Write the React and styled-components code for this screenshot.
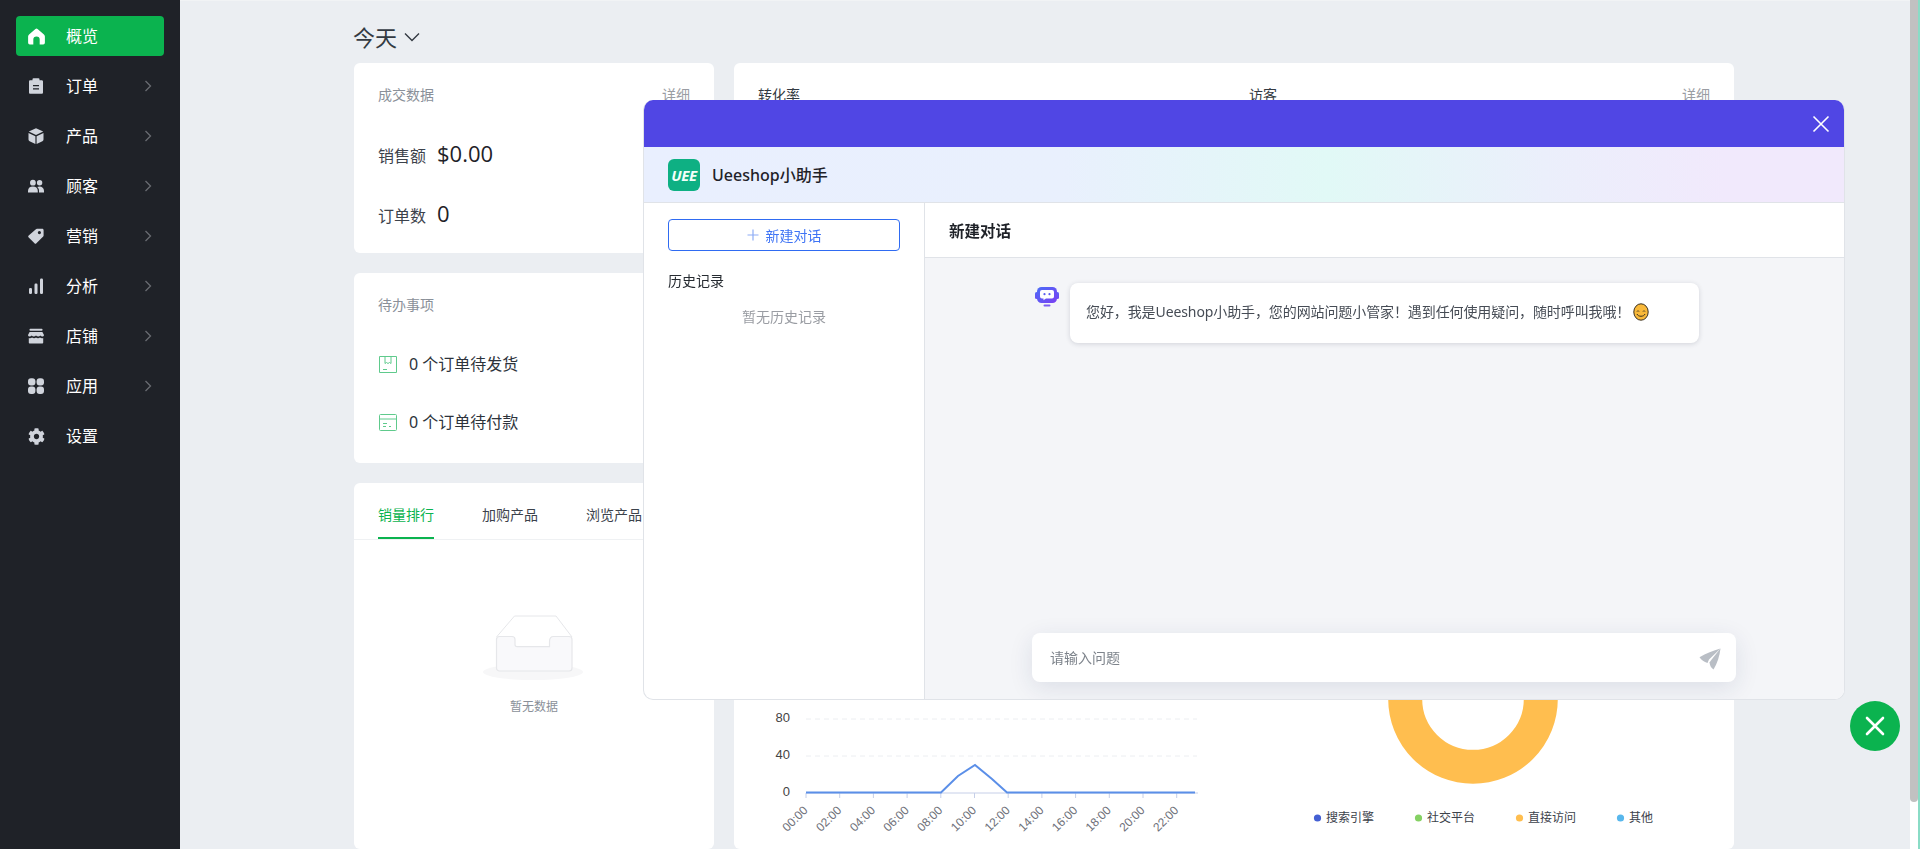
import React from "react";
import styled, { createGlobalStyle } from "styled-components";
import { FaCog } from "react-icons/fa";

const GlobalStyle = createGlobalStyle`
  html, body {
    margin: 0;
    padding: 0;
    height: 100%;
    overflow: hidden;
  }
  body {
    font-family: "Noto Sans", "Noto Sans CJK SC", sans-serif;
    color: #1f2228;
    background: #ebeef2;
  }
  * {
    box-sizing: border-box;
  }
`;

const Page = styled.div`
  display: flex;
  width: 1920px;
  height: 849px;
  overflow: hidden;
`;

const Sidebar = styled.nav`
  flex: 0 0 180px;
  padding: 16px 16px 0;
  background: #1f2228;
`;

const NavItem = styled.div`
  display: flex;
  align-items: center;
  height: 40px;
  margin-bottom: 10px;
  padding-left: 12px;
  border-radius: 4px;
  background: ${(p) => (p.$active ? "#0bb34f" : "transparent")};
  color: ${(p) => (p.$active ? "#fff" : "#d0d4dc")};

  svg.icon {
    flex: 0 0 16px;
    width: 16px;
    height: 16px;
    fill: currentColor;
  }

  svg.big {
    flex: 0 0 17px;
    width: 17px;
    height: 17px;
    margin: 0 -0.5px;
  }
`;

const NavLabel = styled.span`
  margin-left: 22px;
  flex: 1;
  color: #fff;
  font-size: 16px;
  line-height: 20px;
`;

const NavArrow = styled.svg`
  width: 8px;
  height: 12px;
  margin-right: 12px;
  fill: none;
  stroke: #696c72;
  stroke-width: 1.3;
`;

const Main = styled.main`
  flex: 1;
  height: 849px;
  padding-left: 174px;
  border-top: 1px solid #f1f3f5;
  overflow: hidden;
`;

const DateBar = styled.div`
  display: flex;
  align-items: center;
  height: 62px;
  margin-left: -1px;
  padding-top: 9px;
  color: #333a42;
  font-size: 22px;
  line-height: 30px;

  svg {
    width: 16px;
    height: 10px;
    margin: 0 0 0 7px;
    fill: none;
    stroke: #333a42;
    stroke-width: 1.4;
  }
`;

const Grid = styled.div`
  display: grid;
  grid-template-columns: 360px 1000px;
  grid-template-rows: 190px 190px 366px;
  gap: 20px;
`;

const Card = styled.section`
  position: relative;
  padding: ${(p) => p.$padding || "24px"};
  border-radius: 6px;
  background: #fff;
  grid-row: ${(p) => p.$rows || "auto"};
  overflow: hidden;
`;

const CardHead = styled.div`
  display: flex;
  justify-content: space-between;
  gap: 20px;
  height: 20px;
  font-size: 14px;
  line-height: 20px;
`;

const CardTitle = styled.span`
  color: ${(p) => (p.$dark ? "#333a42" : "#8a9099")};
  flex: ${(p) => (p.$width ? `0 0 ${p.$width}px` : "none")};
  margin-top: -2px;
`;

const DetailLink = styled.span`
  margin-left: auto;
  color: #9a9da3;
  margin-top: -2px;
`;

const StatRow = styled.div`
  display: flex;
  align-items: center;
  height: 40px;
  margin-top: ${(p) => p.$top}px;
  color: #3c424b;
  font-size: 16px;
  line-height: 22px;

  b {
    margin: -6px 0 0 11px;
    color: #1f2228;
    font-family: "Open Sans", "Noto Sans", sans-serif;
    font-size: 22px;
    font-weight: 400;
    line-height: 30px;
  }
`;

const TodoRow = styled.div`
  display: flex;
  align-items: center;
  gap: 12px;
  height: 24px;
  margin-top: ${(p) => p.$top}px;
  color: #2d333b;
  font-size: 16px;
  line-height: 24px;

  svg {
    margin-left: 1px;
    width: 18px;
    height: 17px;
    fill: none;
    stroke: #5fca8c;
    stroke-width: 1;
  }
`;

const Tabs = styled.div`
  display: flex;
  gap: 48px;
  height: 57px;
  padding: 21px 24px 0;
  border-bottom: 1px solid #eff1f3;
`;

const Tab = styled.div`
  height: 35px;
  color: ${(p) => (p.$active ? "#0bb34f" : "#3c424b")};
  border-bottom: 2px solid ${(p) => (p.$active ? "#0bb34f" : "transparent")};
  font-size: 14px;
  line-height: 22px;
`;

const Empty = styled.div`
  display: flex;
  flex-direction: column;
  align-items: center;
  padding-top: 75px;
  color: #8a9099;
  font-size: 12px;
  line-height: 18px;

  svg {
    width: 102px;
    height: 66px;
    margin-bottom: 17px;
  }
`;

const ChartRow = styled.div`
  display: flex;
  height: 100%;
`;

const Modal = styled.div`
  position: fixed;
  top: 100px;
  left: 643px;
  display: flex;
  flex-direction: column;
  width: 1202px;
  height: 600px;
  border: 1px solid #e0e3e8;
  border-top: 0;
  border-radius: 10px;
  background: #fff;
  overflow: hidden;
`;

const ModalBar = styled.div`
  display: flex;
  justify-content: flex-end;
  align-items: center;
  flex: 0 0 47px;
  margin: 0 -1px;
  padding-right: 15px;
  background: #5046e4;

  svg {
    width: 18px;
    height: 18px;
    stroke: #fff;
    stroke-width: 1.6;
  }
`;

const ModalBrand = styled.div`
  display: flex;
  align-items: center;
  gap: 12px;
  flex: 0 0 56px;
  padding-left: 24px;
  border-bottom: 1px solid #e0e3e8;
  background: linear-gradient(90deg, #e9effe 0%, #e9f0fd 35%, #e1f9f6 57%, #ebeffb 75%, #f1e9fc 90%, #f1e9fc 100%);
`;

const Logo = styled.div`
  display: flex;
  align-items: center;
  justify-content: center;
  width: 32px;
  height: 32px;
  border-radius: 6px;
  background: #0eb083;
  color: #f2fff9;
  font-family: "Open Sans", sans-serif;
  font-size: 15px;
  font-style: italic;
  font-weight: 700;
  letter-spacing: -0.3px;
`;

const BrandName = styled.span`
  color: #1f2228;
  font-size: 16px;
  font-weight: 500;
  line-height: 22px;
`;

const ModalBody = styled.div`
  display: flex;
  flex: 1;
  min-height: 0;
`;

const HistoryPane = styled.aside`
  flex: 0 0 281px;
  padding: 16px 24px;
  border-right: 1px solid #e0e3e8;
`;

const NewChatButton = styled.div`
  display: flex;
  align-items: center;
  justify-content: center;
  gap: 7px;
  height: 32px;
  border: 1px solid #2f6bf2;
  border-radius: 4px;
  color: #3f74f5;
  font-size: 14px;

  svg {
    width: 12px;
    height: 12px;
    stroke: #8dacf5;
    stroke-width: 1.2;
  }
`;

const HistoryTitle = styled.div`
  margin-top: 20px;
  color: #262b31;
  font-size: 14px;
  line-height: 20px;
`;

const HistoryEmpty = styled.div`
  margin-top: 16px;
  color: #9a9da3;
  font-size: 14px;
  line-height: 20px;
  text-align: center;
`;

const ChatPane = styled.div`
  display: flex;
  flex-direction: column;
  flex: 1;
  background: #f4f5f8;
`;

const ChatHead = styled.div`
  flex: 0 0 55px;
  padding: 0 24px;
  border-bottom: 1px solid #e0e3e8;
  background: #fff;
  color: #1f2228;
  font-size: 15.5px;
  font-weight: 700;
  line-height: 56px;
  overflow: hidden;
`;

const ChatBody = styled.div`
  display: flex;
  flex: 1;
  padding: 25px 0 0 110px;
`;

const BotAvatar = styled.svg`
  flex: 0 0 24px;
  width: 24px;
  height: 20px;
  margin: 4px 11px 0 0;
`;

const Bubble = styled.div`
  display: flex;
  align-items: center;
  width: 629px;
  height: 60px;
  padding: 0 0 2px 16px;
  border-radius: 8px;
  background: #fff;
  box-shadow: 0 1px 5px rgba(30, 40, 60, 0.16);
  color: #464c55;
  font-size: 14px;
  line-height: 20px;
  letter-spacing: -0.1px;

  svg {
    width: 16px;
    height: 18px;
    margin-left: 3px;
  }
`;

const InputBar = styled.div`
  display: flex;
  align-items: center;
  justify-content: space-between;
  width: 704px;
  height: 49px;
  margin: 0 0 17px 107px;
  padding: 0 15px 0 18px;
  border-radius: 8px;
  background: #fff;
  box-shadow: 0 6px 24px rgba(30, 50, 90, 0.11);
  color: #7d838b;
  font-size: 14px;

  span {
    margin-top: -2px;
  }

  svg {
    width: 22px;
    height: 22px;
    margin-top: 3px;
    fill: #b9bec5;
  }
`;

const FloatClose = styled.div`
  position: fixed;
  top: 701px;
  left: 1850px;
  display: flex;
  align-items: center;
  justify-content: center;
  width: 50px;
  height: 50px;
  border-radius: 50%;
  background: #0bb34f;

  svg {
    width: 24px;
    height: 24px;
    stroke: #fff;
    stroke-width: 2.6;
    stroke-linecap: round;
  }
`;

const ScrollTrack = styled.div`
  flex: 0 0 10px;
  height: 849px;
  border-right: 2px solid #8adcc6;
  background: #fff;
`;

const ScrollThumb = styled.div`
  height: 802px;
  border-radius: 0 0 4px 4px;
  background: #c1c1c1;
`;

const navItems = [
  { label: "概览", icon: "home", active: true },
  { label: "订单", icon: "order", arrow: true },
  { label: "产品", icon: "cube", arrow: true },
  { label: "顾客", icon: "users", arrow: true },
  { label: "营销", icon: "tag", arrow: true },
  { label: "分析", icon: "bars", arrow: true },
  { label: "店铺", icon: "store", arrow: true },
  { label: "应用", icon: "apps", arrow: true },
  { label: "设置", icon: "gear" }
];

const NavIcon = ({ name }) => {
  if (name === "gear") return <FaCog className="icon big" />;
  return (
    <svg className={name === "home" ? "icon big" : "icon"} viewBox="0 0 16 16">
      {name === "home" && (
        <path d="M7 .9a1.500 1.500 0 0 1 2 0l6 5.200c.6.5.9 1.100.9 1.800v6a1.600 1.600 0 0 1-1.600 1.600H11v-4.600a3 3 0 0 0-6 0v4.600H1.700A1.600 1.600 0 0 1 .1 13.900v-6c0-.7.3-1.300.9-1.800z" />
      )}
      {name === "order" && (
        <path
          fillRule="evenodd"
          d="M5.500.3h5a1 1 0 0 1 1 1v.9h2.200c.8 0 1.300.6 1.300 1.300v10.900c0 .8-.6 1.300-1.300 1.300H2.300c-.8 0-1.300-.6-1.300-1.300V3.500c0-.8.6-1.300 1.300-1.300h2.200v-.9a1 1 0 0 1 1-1zM5 7v1.200h6V7zm0 3.200v1.200h6v-1.200z"
        />
      )}
      {name === "cube" && (
        <>
          <path d="M8 .2 15.200 3.600 8 7 .8 3.600z" />
          <path d="M.5 4.900 7.400 8.200V15.900L1.600 13.200a1.800 1.800 0 0 1-1.100-1.600z" />
          <path d="M15.500 4.900 8.600 8.200V15.900L14.400 13.200a1.800 1.800 0 0 0 1.100-1.600z" />
        </>
      )}
      {name === "users" && (
        <>
          <circle cx="4.900" cy="4.700" r="2.900" />
          <circle cx="11.600" cy="4.700" r="2.700" />
          <path d="M0 14.600v-1.900c0-2.600 2.100-4.200 4.900-4.200s4.900 1.600 4.900 4.200v1.900z" />
          <path d="M11 14.600h5v-1.900c0-2.500-2-4.200-4.400-4.200-.9 0-1.700.2-2.400.6 1.200.9 1.800 2.200 1.800 3.700z" />
        </>
      )}
      {name === "tag" && (
        <path
          fillRule="evenodd"
          d="M8.900.8h5.300c.8 0 1.400.6 1.400 1.400v5.300c0 .4-.2.7-.4 1L8.400 15.300a1.300 1.300 0 0 1-1.900 0L.7 9.500a1.300 1.300 0 0 1 0-1.900L7.900 1.200c.3-.2.6-.4 1-.4zM11.400 3a1.600 1.600 0 1 0 0 3.200 1.600 1.600 0 0 0 0-3.200z"
        />
      )}
      {name === "bars" && (
        <>
          <rect x="1" y="10" width="3" height="6" rx="1.200" />
          <rect x="6.500" y="5.500" width="3" height="10.500" rx="1.200" />
          <rect x="12" y="0.500" width="3" height="15.500" rx="1.200" />
        </>
      )}
      {name === "store" && (
        <>
          <rect x="1.500" y="0.800" width="13" height="2" rx="0.800" />
          <path d="M1.600 4h12.800L16 7c0 .9-.7 1.500-1.600 1.500-.9 0-1.600-.3-2.100-.9-.5.6-1.300.9-2.100.9-.8 0-1.600-.3-2.200-.9-.6.6-1.400.9-2.200.9-.8 0-1.600-.3-2.100-.9-.5.6-1.200.9-2.100.9C.7 8.500 0 7.900 0 7z" />
          <path d="M.8 10c.4.1.8.2 1.200.2.8 0 1.500-.2 2-.6.7.4 1.400.6 2 .6.8 0 1.500-.2 2-.6.5.4 1.200.6 2 .6.700 0 1.400-.2 2-.6.500.4 1.200.6 2 .6.400 0 .8-.1 1.200-.2v4.400c0 .7-.5 1.100-1.100 1.100H1.900c-.6 0-1.100-.4-1.100-1.100z" />
        </>
      )}
      {name === "apps" && (
        <>
          <rect x="0" y="0.200" width="7.400" height="7.400" rx="3" />
          <rect x="8.600" y="0.200" width="7.400" height="7.400" rx="3" />
          <rect x="0" y="8.600" width="7.400" height="7.400" rx="3" />
          <rect x="8.600" y="8.600" width="7.400" height="7.400" rx="3" />
        </>
      )}
    </svg>
  );
};

const tickHours = ["00:00", "02:00", "04:00", "06:00", "08:00", "10:00", "12:00", "14:00", "16:00", "18:00", "20:00", "22:00"];
const chartFont = '"Liberation Sans", sans-serif';

// coordinates are relative to the chart card, which starts at 734,483
const LineChart = () => (
  <svg width="500" height="366" viewBox="0 0 500 366">
    {[[236, "80"], [273, "40"]].map(([y, label]) => (
      <g key={label}>
        <line x1="72" x2="463" y1={y} y2={y} stroke="#eceef1" strokeDasharray="5 4" />
        <text x="56" y={y + 3} textAnchor="end" fontSize="13" fontFamily={chartFont} fill="#444">
          {label}
        </text>
      </g>
    ))}
    <text x="56" y="313" textAnchor="end" fontSize="13" fontFamily={chartFont} fill="#444">
      0
    </text>
    <line x1="72" x2="464" y1="310" y2="310" stroke="#c6cfe8" />
    {tickHours.map((h, i) => {
      const x = 72 + i * 33.7;
      return (
        <g key={h}>
          <line x1={x} x2={x} y1="310" y2="315" stroke="#c6cfe8" />
          <text
            x={x + 2.5}
            y="328"
            textAnchor="end"
            fontSize="12"
            fontFamily={chartFont}
            fill="#6e7079"
            transform={`rotate(-45 ${x + 2.5} 328)`}
          >
            {h}
          </text>
        </g>
      );
    })}
    <polyline
      points="72,309.500 207,309.500 224,293 241,282 258,296 273,309.500 461,309.500"
      fill="none"
      stroke="#5b8fe8"
      strokeWidth="2"
    />
  </svg>
);

const legend = [
  ["搜索引擎", "#4460d3", 84],
  ["社交平台", "#85d163", 185],
  ["直接访问", "#ffbe4f", 286],
  ["其他", "#58b7ec", 387]
];

const DonutChart = () => (
  <svg width="500" height="366" viewBox="0 0 500 366">
    <circle cx="239" cy="216" r="67.800" fill="none" stroke="#ffbe4f" strokeWidth="34" />
    {legend.map(([label, color, x]) => (
      <g key={label}>
        <circle cx={x - 0.5} cy="335" r="3.600" fill={color} />
        <text x={x + 8} y="339" fontSize="12" fill="#3c424b">
          {label}
        </text>
      </g>
    ))}
  </svg>
);

const App = () => (
  <Page>
    <GlobalStyle />
    <Sidebar>
      {navItems.map((item) => (
        <NavItem key={item.label} $active={item.active}>
          <NavIcon name={item.icon} />
          <NavLabel>{item.label}</NavLabel>
          {item.arrow && (
            <NavArrow viewBox="0 0 8 12">
              <path d="M1.500 1 6.500 6 1.500 11" />
            </NavArrow>
          )}
        </NavItem>
      ))}
    </Sidebar>

    <Main>
      <DateBar>
        今天
        <svg viewBox="0 0 16 10">
          <path d="M1 1.500 8 8.500 15 1.500" />
        </svg>
      </DateBar>
      <Grid>
        <Card>
          <CardHead>
            <CardTitle>成交数据</CardTitle>
            <DetailLink>详细</DetailLink>
          </CardHead>
          <StatRow $top={29}>
            销售额<b>$0.00</b>
          </StatRow>
          <StatRow $top={20}>
            订单数<b>0</b>
          </StatRow>
        </Card>
        <Card $rows="span 2">
          <CardHead>
            <CardTitle $dark $width={471}>转化率</CardTitle>
            <CardTitle $dark>访客</CardTitle>
            <DetailLink>详细</DetailLink>
          </CardHead>
        </Card>
        <Card>
          <CardHead>
            <CardTitle>待办事项</CardTitle>
          </CardHead>
          <TodoRow $top={35}>
            <svg viewBox="0 0 18 17">
              <path d="M.5.5h17v16H.5zM6 .5v7l1.500-1 1.500 1 1.500-1 1.500 1v-7M4 13.500h4" />
            </svg>
            0 个订单待发货
          </TodoRow>
          <TodoRow $top={34}>
            <svg viewBox="0 0 18 17">
              <path d="M1.500.5h15a1 1 0 0 1 1 1v14a1 1 0 0 1-1 1h-15a1 1 0 0 1-1-1v-14a1 1 0 0 1 1-1zM.5 5h17M4 9.500h4M4 12.500h3M10 12.500h2" />
            </svg>
            0 个订单待付款
          </TodoRow>
        </Card>
        <Card $padding="0">
          <Tabs>
            <Tab $active>销量排行</Tab>
            <Tab>加购产品</Tab>
            <Tab>浏览产品</Tab>
          </Tabs>
          <Empty>
            <svg viewBox="0 0 102 66">
              <ellipse cx="50" cy="57" rx="50" ry="8" fill="#f7f7f8" />
              <path d="M13.500 22 31.500 1H73L89 22" fill="#fff" stroke="#e6e7ea" strokeWidth="1" />
              <path
                d="M13.500 24.500a3 3 0 0 1 3-3h12.500c2 0 3 1 3 3v5c0 1.500.7 2.200 2.200 2.200h32.300v-5c0-3 1.500-5.200 4-5.200h15.500a3 3 0 0 1 3 3V53a3 3 0 0 1-3 3H16.500a3 3 0 0 1-3-3z"
                fill="#f9f9fb"
                stroke="#e6e7ea"
                strokeWidth="1.200"
              />
            </svg>
            暂无数据
          </Empty>
        </Card>
        <Card $padding="0">
          <ChartRow>
            <LineChart />
            <DonutChart />
          </ChartRow>
        </Card>
      </Grid>
    </Main>

    <ScrollTrack>
      <ScrollThumb />
    </ScrollTrack>

    <Modal>
      <ModalBar>
        <svg viewBox="0 0 18 18">
          <path d="M1.500 1.500 16.500 16.500M16.500 1.500 1.500 16.500" />
        </svg>
      </ModalBar>
      <ModalBrand>
        <Logo>UEE</Logo>
        <BrandName>Ueeshop小助手</BrandName>
      </ModalBrand>
      <ModalBody>
        <HistoryPane>
          <NewChatButton>
            <svg viewBox="0 0 12 12">
              <path d="M6 .5v11M.5 6h11" />
            </svg>
            新建对话
          </NewChatButton>
          <HistoryTitle>历史记录</HistoryTitle>
          <HistoryEmpty>暂无历史记录</HistoryEmpty>
        </HistoryPane>
        <ChatPane>
          <ChatHead>新建对话</ChatHead>
          <ChatBody>
            <BotAvatar viewBox="0 0 24 20">
              <defs>
                <linearGradient id="botFill" x1="0" y1="0" x2="1" y2="1">
                  <stop offset="0" stopColor="#4a6cf7" />
                  <stop offset="1" stopColor="#7b3ff2" />
                </linearGradient>
              </defs>
              <rect x="0" y="5" width="3" height="7" rx="1.500" fill="url(#botFill)" />
              <rect x="21" y="5" width="3" height="7" rx="1.500" fill="url(#botFill)" />
              <rect x="2" y="0" width="20" height="16" rx="4.500" fill="url(#botFill)" />
              <path
                d="M7 3h10a2 2 0 0 1 2 2v4.500a2 2 0 0 1-2 2h-6l-2.500 1.800v-1.800H7a2 2 0 0 1-2-2V5a2 2 0 0 1 2-2z"
                fill="#fff"
              />
              <circle cx="9.500" cy="7.200" r="1.100" fill="#5a5cf0" />
              <circle cx="14.500" cy="7.200" r="1.100" fill="#5a5cf0" />
              <rect x="8.500" y="17.500" width="7" height="2" rx="1" fill="#7b5cf2" />
            </BotAvatar>
            <Bubble>
              您好，我是Ueeshop小助手，您的网站问题小管家！遇到任何使用疑问，随时呼叫我哦！
              <svg viewBox="0 0 16 18">
                <ellipse cx="8" cy="9" rx="7.200" ry="8.200" fill="#f9b93a" stroke="#3a3020" strokeWidth="1" />
                <path d="M4 8.500c.5-1 1.500-1 2 0M10 8.500c.5-1 1.500-1 2 0" fill="none" stroke="#3a3020" strokeWidth="0.900" />
                <path d="M4 11c1 3 7 3 8 0" fill="none" stroke="#3a3020" strokeWidth="1" />
              </svg>
            </Bubble>
          </ChatBody>
          <InputBar>
            <span>请输入问题</span>
            <svg viewBox="0 0 22 22">
              <path d="M21.500.500 10 11.500 8.500 15C5 13.500 2.500 12 .500 9.200 7 5.500 14 2.500 21.500.500z" />
              <path d="M21.500.500C20.500 8 18.500 15 14.500 21.500 12.500 20 11 18.500 10.500 14.500 13 11 17 6 21.500.500z" />
            </svg>
          </InputBar>
        </ChatPane>
      </ModalBody>
    </Modal>

    <FloatClose>
      <svg viewBox="0 0 24 24">
        <path d="M4 4 20 20M20 4 4 20" />
      </svg>
    </FloatClose>
  </Page>
);

export default App;
